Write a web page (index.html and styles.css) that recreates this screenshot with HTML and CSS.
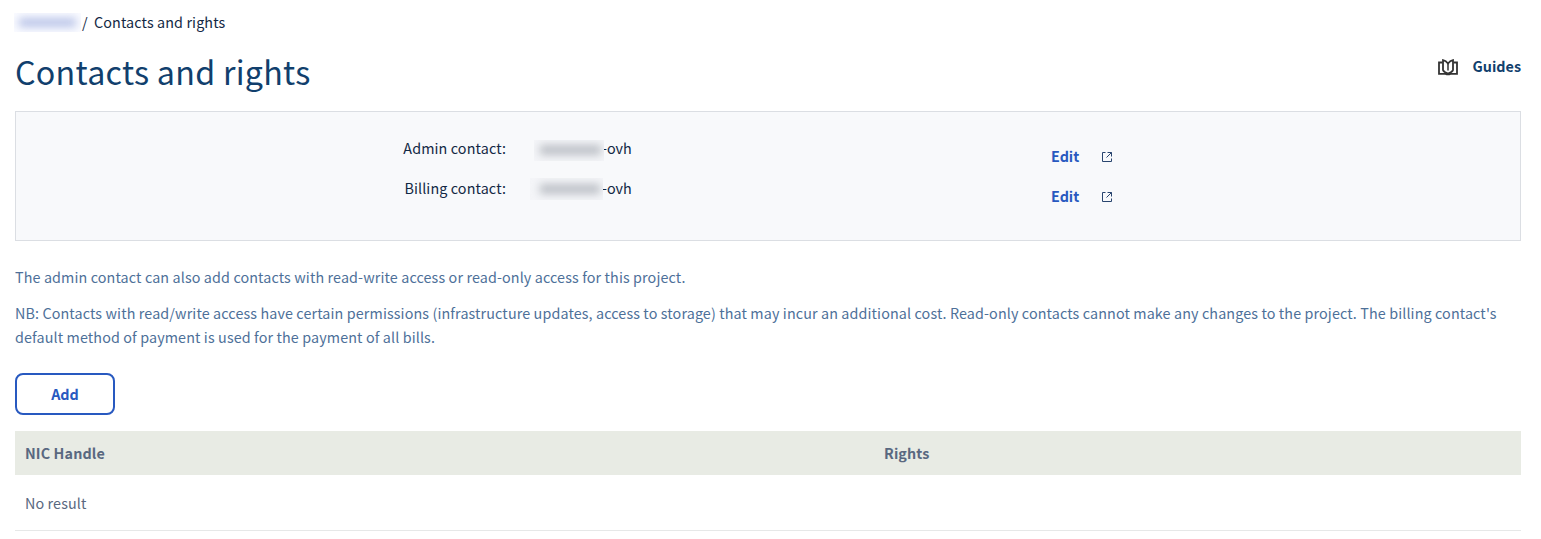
FILE: index.html
```html
<!DOCTYPE html>
<html lang="en">
<head>
<meta charset="utf-8">
<title>Contacts and rights</title>
<link rel="stylesheet" href="styles.css">
</head>
<body>
<main class="page">
  <nav class="breadcrumb"><span class="redacted redacted-link"></span><span class="slash">/</span><span class="crumb">Contacts and rights</span></nav>
  <header class="header">
    <h1 class="title">Contacts and rights</h1>
    <a class="guides">
      <svg class="book" width="20" height="17" viewBox="0 0 20 17" fill="none" stroke="#333" stroke-width="1.800"><path d="M4.500 3.500H1v11.300h6.500q2.500 1 5 0H19V3.500h-3.500"/><path d="M10 4.500Q8 2 5 1.200V11q.5 2 5 3.500 4.500-1.500 5-3.500V1.200Q12 2 10 4.500z"/><path d="M10 4v7.500" stroke-width="1.500"/></svg>
      <span>Guides</span>
    </a>
  </header>
  <section class="contacts">
    <div class="row">
      <span class="label">Admin contact:</span>
      <span class="value"><span class="redacted"></span><span class="suffix">-ovh</span></span>
      <a class="edit"><span>Edit</span><svg width="12" height="12" viewBox="0 0 12 12" fill="none" stroke="#29456f"><path d="M4.500 1.500h-3v9h9v-3M6.500 1.500h4v4M10.500 1.500l-5 5"/></svg></a>
    </div>
    <div class="row">
      <span class="label">Billing contact:</span>
      <span class="value"><span class="redacted redacted-wide"></span><span class="suffix">-ovh</span></span>
      <a class="edit"><span>Edit</span><svg width="12" height="12" viewBox="0 0 12 12" fill="none" stroke="#29456f"><path d="M4.500 1.500h-3v9h9v-3M6.500 1.500h4v4M10.500 1.500l-5 5"/></svg></a>
    </div>
  </section>
  <p class="text">The admin contact can also add contacts with read-write access or read-only access for this project.</p>
  <p class="text">NB: Contacts with read/write access have certain permissions (infrastructure updates, access to storage) that may incur an additional cost. Read-only contacts cannot make any changes to the project. The billing contact's<br>default method of payment is used for the payment of all bills.</p>
  <button class="add">Add</button>
  <div class="table">
    <div class="thead"><span>NIC Handle</span><span>Rights</span></div>
    <div class="tbody">No result</div>
  </div>
</main>
</body>
</html>
```
FILE: styles.css
```css
* { box-sizing: border-box; }
body { margin: 0; background: #fff; }
.page {
  width: 1541px;
  height: 539px;
  padding: 10px 20px 0 15px;
  font-family: "Noto Sans CJK SC", "Noto Sans", sans-serif;
  font-size: 14.33px;
  line-height: 24px;
  letter-spacing: .117px;
  color: #122844;
  overflow: hidden;
}
.breadcrumb { display: flex; height: 24px; }
.slash { margin-left: 1px; width: 12px; }
.redacted {
  position: relative;
  z-index: 1;
  display: flex;
  width: 70px;
  height: 21px;
  padding: 5px 3px 6px 6px;
  overflow: hidden;
  background: #f4f5f8;
}
.redacted::before {
  content: "";
  flex: 1;
  background: #bcc0c6;
  filter: blur(4px);
}
.redacted-wide { width: 73px; height: 22px; padding: 6px 3px 6px 10px; }
.redacted-link {
  width: 67px;
  height: 19px;
  margin: 3px 0 0 -1px;
  padding: 5px 5px 5px 5px;
  background: #fafbff;
}
.redacted-link::before { background: #b8c3e8; }
.header { display: flex; justify-content: space-between; height: 77px; }
.title {
  margin: 15px 0 0;
  font-size: 32.23px;
  line-height: 44px;
  font-weight: 400;
  letter-spacing: .27px;
  color: #113f6d;
}
.guides { display: flex; margin-top: 20px; font-weight: 700; letter-spacing: 0; color: #113f6d; }
.book { margin: 5px 15px 0 0; }
.contacts {
  height: 130px;
  padding: 24px 0 0;
  border: 1px solid #dbdee3;
  background: #f8f9fb;
}
.row { display: grid; grid-template-columns: 490px 545px auto; height: 40px; }
.label { text-align: right; }
.value { display: flex; padding-left: 28px; }
.value .redacted { margin-top: 4px; }
.value .redacted-wide { margin: 2px 0 0 -4px; }
.suffix { margin-left: -2px; letter-spacing: 0; }
.redacted-wide + .suffix { margin-left: -1px; }
.edit { display: flex; margin-top: 8px; font-weight: 700; letter-spacing: 0; color: #2859c0; }
.edit svg { margin: 7px 0 0 22px; }
.text { margin: 24px 0 0; color: #4d7099; white-space: nowrap; }
.text + .text { margin-top: 12px; }
.add {
  display: block;
  width: 100px;
  height: 42px;
  margin: 24px 0 16px;
  padding: 0;
  border: 2px solid #2859c0;
  border-radius: 8px;
  background: #fff;
  color: #2859c0;
  font: inherit;
  font-weight: 700;
}
.thead {
  display: grid;
  grid-template-columns: 859px auto;
  height: 44px;
  padding: 10px 10px 0;
  background: #e8ebe4;
  color: #596880;
  font-weight: 700;
}
.tbody { height: 56px; padding: 16px 10px 0; border-bottom: 1px solid #e6e8e8; color: #596880; }
```
